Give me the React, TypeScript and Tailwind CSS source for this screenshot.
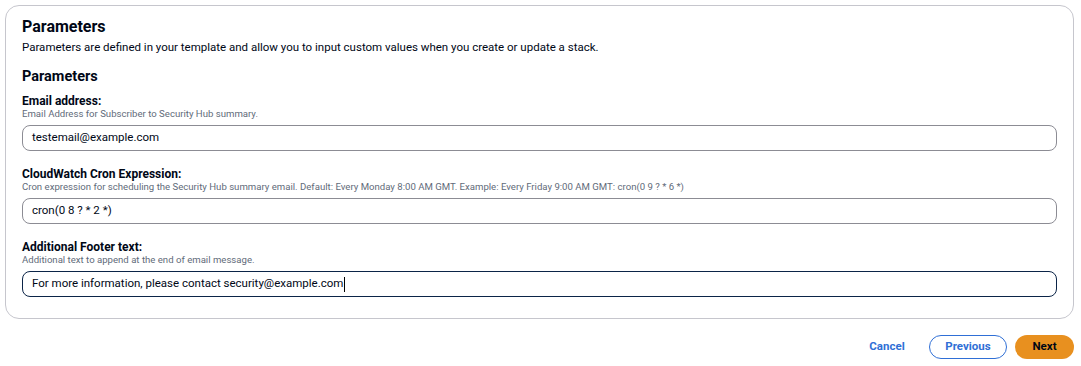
import React from "react";

const font = { fontFamily: 'Roboto, "Open Sans", Arial, sans-serif' };

function Field({ label, desc, value, focused }: { label: string; desc: string; value: string; focused?: boolean }) {
  return (
    <div className="flex flex-col">
      <div className="text-[12px] font-bold leading-[14px] text-[#000716]">{label}</div>
      <div className="text-[9.6px] leading-[12px] text-[#5f6b7a]">{desc}</div>
      <div
        className={
          "mt-[5px] h-[26px] rounded-[8px] px-[9px] flex items-center text-[11.5px] text-[#000716] " +
          (focused ? "border-[1.5px] border-[#0b2447]" : "border border-[#8c8c94]")
        }
      >
        <span>{value}</span>
        {focused && <span className="ml-[1px] inline-block w-[1px] h-[15px] bg-black" />}
      </div>
    </div>
  );
}

export default function App() {
  return (
    <div className="w-[1081px] h-[366px] bg-white pt-[5px] px-[5px]" style={font}>
      <div className="w-[1069px] rounded-[14px] border border-[#c6c6cd] px-[16px] pt-[10px] pb-[21px]">
        <div className="text-[16px] font-bold leading-[22px] text-[#000716]">Parameters</div>
        <div className="text-[11.5px] leading-[18px] text-[#000716]">
          Parameters are defined in your template and allow you to input custom values when you create or update a stack.
        </div>
        <div className="text-[14.5px] font-bold leading-[20px] text-[#000716] mt-[11px]">Parameters</div>
        <div className="mt-[7px] flex flex-col gap-[16px]">
          <Field
            label="Email address:"
            desc="Email Address for Subscriber to Security Hub summary."
            value="testemail@example.com"
          />
          <Field
            label="CloudWatch Cron Expression:"
            desc="Cron expression for scheduling the Security Hub summary email. Default: Every Monday 8:00 AM GMT. Example: Every Friday 9:00 AM GMT: cron(0 9 ? * 6 *)"
            value="cron(0 8 ? * 2 *)"
          />
          <Field
            label="Additional Footer text:"
            desc="Additional text to append at the end of email message."
            value="For more information, please contact security@example.com"
            focused
          />
        </div>
      </div>
      <div className="w-[1069px] flex justify-end items-center mt-[16px]">
        <button className="text-[11.5px] font-bold text-[#2f6fd6] w-[52px] h-[24px] mr-[16px] text-center">Cancel</button>
        <button className="text-[11.5px] font-bold text-[#2f6fd6] h-[24px] w-[78px] rounded-full border border-[#2f6fd6] mr-[8px]">
          Previous
        </button>
        <button className="text-[11.5px] font-bold text-[#000716] h-[24px] w-[59px] rounded-full bg-[#e8901f]">Next</button>
      </div>
    </div>
  );
}
